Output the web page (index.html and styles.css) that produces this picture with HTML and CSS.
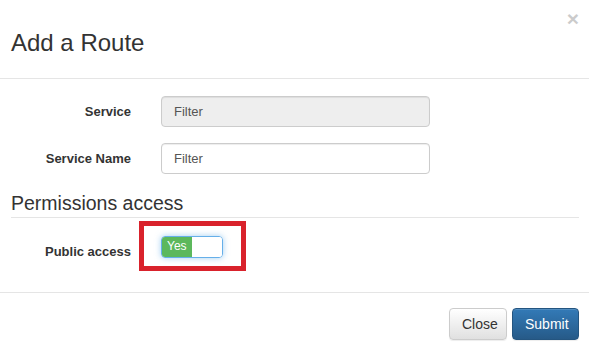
FILE: index.html
```html
<!DOCTYPE html>
<html>
<head>
<meta charset="utf-8">
<link rel="stylesheet" href="styles.css">
</head>
<body>
<div class="modal">
  <div class="modal-header">
    <h4 class="modal-title">Add a Route</h4>
    <span class="close">×</span>
  </div>
  <div class="modal-body">
    <div class="form-row">
      <label class="form-label">Service</label>
      <div class="form-input disabled">Filter</div>
    </div>
    <div class="form-row">
      <label class="form-label">Service Name</label>
      <div class="form-input">Filter</div>
    </div>
    <h3 class="section-title">Permissions access</h3>
    <div class="form-row toggle-row">
      <label class="form-label">Public access</label>
      <div class="toggle-wrap">
        <div class="toggle">
          <span class="toggle-on">Yes</span>
          <span class="toggle-off"></span>
        </div>
        <div class="highlight"></div>
      </div>
    </div>
  </div>
  <div class="modal-footer">
    <button class="btn btn-default">Close</button>
    <button class="btn btn-primary">Submit</button>
  </div>
</div>
</body>
</html>
```
FILE: styles.css
```css
* { box-sizing: border-box; }
html, body {
  margin: 0;
  padding: 0;
  background: #fff;
  font-family: "Liberation Sans", Arial, sans-serif;
  color: #333;
}
.modal {
  width: 589px;
  height: 351px;
  overflow: hidden;
}
.modal-header {
  display: flex;
  justify-content: space-between;
  align-items: flex-start;
  height: 79px;
  padding: 0 10px 0 11px;
  border-bottom: 1px solid #e5e5e5;
}
.modal-title {
  margin: 30px 0 0 0;
  font-size: 24px;
  line-height: 26px;
  font-weight: normal;
  color: #333;
}
.close {
  margin-top: 8px;
  font-size: 21px;
  line-height: 21px;
  font-weight: bold;
  color: #000;
  opacity: 0.2;
}
.modal-body {
  padding: 17px 10px 31px 0;
  border-bottom: 1px solid #e5e5e5;
}
.form-row {
  display: flex;
  align-items: flex-start;
  gap: 30px;
  margin-bottom: 16px;
}
.form-row:nth-of-type(2) { margin-bottom: 0; }
.form-label {
  width: 131px;
  text-align: right;
  font-weight: bold;
  font-size: 13px;
  line-height: 18px;
  padding-top: 7px;
  color: #333;
}
.form-input {
  width: 269px;
  height: 31px;
  border: 1px solid #ccc;
  border-radius: 4px;
  padding: 0 12px;
  font-size: 13px;
  line-height: 29px;
  color: #555;
  background: #fff;
  box-shadow: inset 0 1px 1px rgba(0,0,0,0.075);
}
.form-input.disabled {
  background: #eee;
}
.section-title {
  margin: 18px 0 18px 11px;
  font-size: 19.5px;
  line-height: 22px;
  font-weight: normal;
  color: #333;
  padding-bottom: 3px;
  border-bottom: 1px solid #e5e5e5;
}
.toggle-row { margin-bottom: 0; }
.toggle-wrap {
  position: relative;
}
.toggle {
  display: flex;
  width: 62px;
  height: 22px;
  border: 1px solid #66afe9;
  border-radius: 4px;
  overflow: hidden;
  box-shadow: 0 0 6px rgba(102,175,233,0.6);
}
.toggle-on {
  width: 30px;
  background: #5cb85c;
  color: #fff;
  font-size: 12px;
  line-height: 19px;
  padding-left: 5px;
}
.toggle-off {
  flex: 1;
  background: #fff;
}
.highlight {
  position: absolute;
  left: -22px;
  top: -15px;
  width: 107px;
  height: 50px;
  border: 5px solid #d9222c;
}
.modal-footer {
  display: flex;
  justify-content: flex-end;
  gap: 5px;
  padding: 15px 10px 0 0;
}
.btn {
  height: 32px;
  font-family: "Liberation Sans", Arial, sans-serif;
  font-size: 14px;
  border-radius: 4px;
  padding: 0 12px;
  cursor: pointer;
}
.btn-default {
  width: 58px;
  color: #333;
  border: 1px solid #ccc;
  background: linear-gradient(to bottom, #fff 0%, #e0e0e0 100%);
  box-shadow: inset 0 1px 0 rgba(255,255,255,0.15), 0 1px 1px rgba(0,0,0,0.075);
}
.btn-primary {
  width: 67px;
  color: #fff;
  border: 1px solid #245580;
  background: linear-gradient(to bottom, #337ab7 0%, #265a88 100%);
  box-shadow: inset 0 1px 0 rgba(255,255,255,0.15), 0 1px 1px rgba(0,0,0,0.075);
}
```
